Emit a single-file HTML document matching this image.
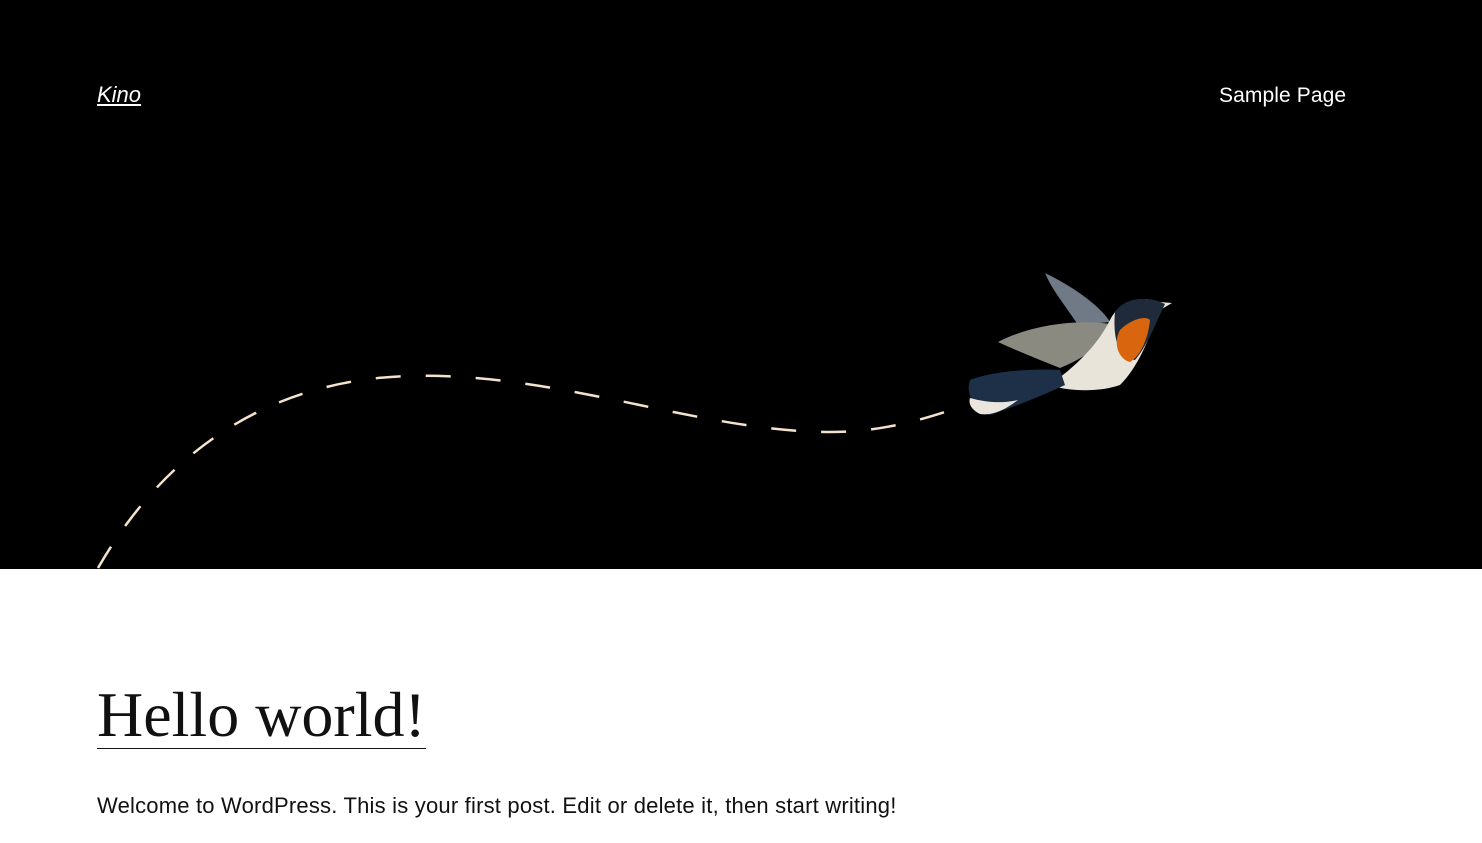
<!DOCTYPE html>
<html><head><meta charset="utf-8"><style>
body{margin:0;width:1482px;height:843px;overflow:hidden;background:#fff;font-family:"Liberation Sans",sans-serif}
.hero{position:absolute;left:0;top:0;width:1482px;height:569px;background:#000}
.logo{position:absolute;left:97px;top:82px;color:#fff;font-style:italic;font-size:22px;text-decoration:underline}
.nav{position:absolute;left:1219px;top:84px;color:#fff;font-size:21px;letter-spacing:0.1px}
h1{position:absolute;left:97px;top:682px;margin:0;font-family:"Liberation Serif",serif;font-weight:300;font-size:64px;line-height:66px;color:#111;border-bottom:1.5px solid #111;letter-spacing:0px}
p{position:absolute;left:97px;top:793px;margin:0;font-size:22px;color:#111;letter-spacing:0.2px}
</style></head><body>
<div class="hero">
<svg width="1482" height="569" style="position:absolute;left:0;top:0">
<path d="M98 568 C160 460 260 380 410 376 C560 372 700 432 830 432 C880 432 920 420 945 412" fill="none" stroke="#f3e3cc" stroke-width="2.5" stroke-dasharray="25 25"/>
<g>
<path d="M1045 273 C1070 285 1100 305 1110 322 L1078 325 C1065 305 1052 290 1045 273Z" fill="#6f7a86"/>
<path d="M998 342 C1030 325 1080 318 1115 325 C1105 345 1080 360 1060 368 C1040 360 1015 350 998 342Z" fill="#8b8a80"/>
<path d="M1110 320 C1120 300 1140 295 1160 302 L1172 303 L1160 310 C1150 335 1140 365 1120 385 C1100 392 1070 392 1050 385 C1070 370 1095 350 1110 320Z" fill="#e9e4da"/>
<path d="M1115 312 C1125 298 1145 295 1165 304 C1158 318 1148 345 1135 360 C1122 358 1112 345 1115 312Z" fill="#1f2a3a"/>
<path d="M1120 330 C1130 320 1145 315 1150 320 C1148 340 1140 356 1130 362 C1120 360 1112 345 1120 330Z" fill="#d9650f"/>
<path d="M1060 370 C1030 368 990 372 970 380 C965 395 975 410 990 415 C1020 405 1050 392 1065 385Z" fill="#1d3048"/>
<path d="M970 398 C985 402 1000 404 1018 400 C1005 410 992 416 980 414 C972 410 968 404 970 398Z" fill="#eae6de"/>
</g>
</svg>
<div class="logo">Kino</div>
<div class="nav">Sample Page</div>
</div>
<h1>Hello world!</h1>
<p>Welcome to WordPress. This is your first post. Edit or delete it, then start writing!</p>
</body></html>
